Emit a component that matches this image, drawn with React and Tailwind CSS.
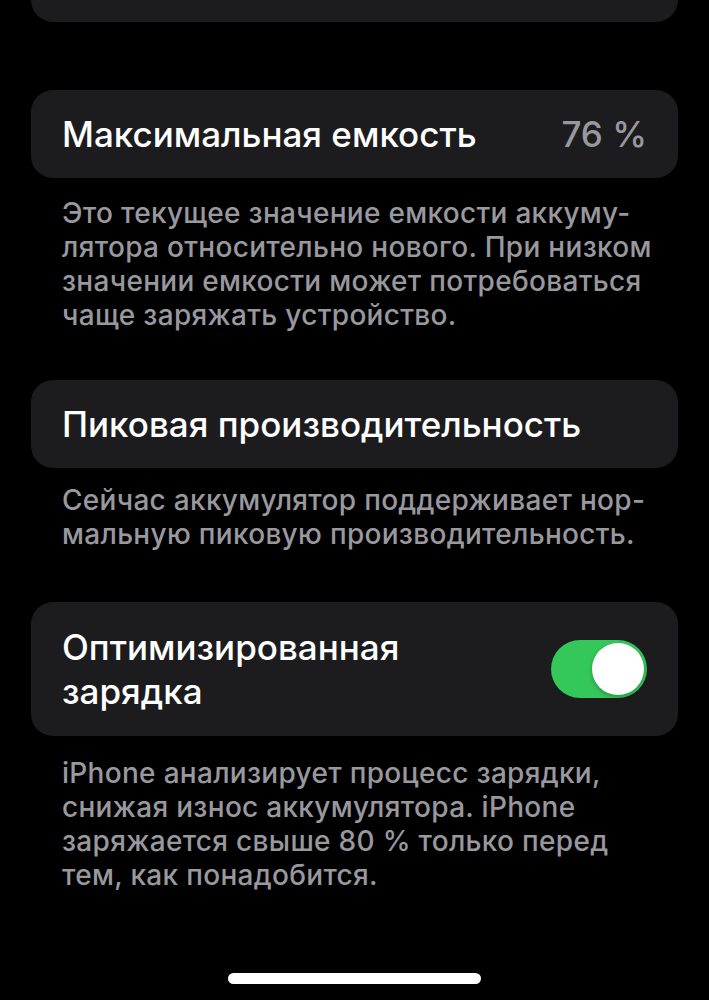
import React from "react";

function Card({ children, className = "" }) {
  return (
    <div className={`mx-[31px] bg-[#1c1c1e] rounded-[22px] px-[31px] flex items-center ${className}`}>
      {children}
    </div>
  );
}

function Footer({ lines, className = "" }) {
  return (
    <div className={`px-[62px] text-[28px] leading-[34px] font-medium tracking-[0.3px] text-[#98989e] ${className}`}>
      {lines.map((l, i) => (
        <div key={i} className="whitespace-nowrap">{l}</div>
      ))}
    </div>
  );
}

export default function App() {
  return (
    <div
      className="w-[709px] h-[1000px] bg-black overflow-hidden relative text-white"
      style={{ fontFamily: "Inter, 'Noto Sans', sans-serif" }}
    >
      <div className="mx-[31px] h-[22px] bg-[#1c1c1e] rounded-b-[22px]" />

      <Card className="mt-[68px] h-[88px] justify-between">
        <span className="text-[35px] font-medium">Максимальная емкость</span>
        <span className="text-[35px] font-medium text-[#98989e]">76 %</span>
      </Card>

      <Footer
        className="mt-[18px]"
        lines={[
          "Это текущее значение емкости аккуму-",
          "лятора относительно нового. При низком",
          "значении емкости может потребоваться",
          "чаще заряжать устройство.",
        ]}
      />

      <Card className="mt-[48px] h-[88px]">
        <span className="text-[35px] font-medium">Пиковая производительность</span>
      </Card>

      <Footer
        className="mt-[15px]"
        lines={[
          "Сейчас аккумулятор поддерживает нор-",
          "мальную пиковую производительность.",
        ]}
      />

      <Card className="mt-[51px] h-[134px] justify-between">
        <div className="text-[35px] font-medium leading-[44px]">
          Оптимизированная
          <br />
          зарядка
        </div>
        <div className="w-[96px] h-[58px] rounded-full bg-[#34c759] flex items-center justify-end pr-[3px]">
          <div className="w-[52px] h-[52px] rounded-full bg-white shadow-[0_2px_4px_rgba(0,0,0,0.25)]" />
        </div>
      </Card>

      <Footer
        className="mt-[20px]"
        lines={[
          "iPhone анализирует процесс зарядки,",
          "снижая износ аккумулятора. iPhone",
          "заряжается свыше 80 % только перед",
          "тем, как понадобится.",
        ]}
      />

      <div className="absolute left-[228px] top-[973px] w-[253px] h-[11px] rounded-full bg-white" />
    </div>
  );
}
